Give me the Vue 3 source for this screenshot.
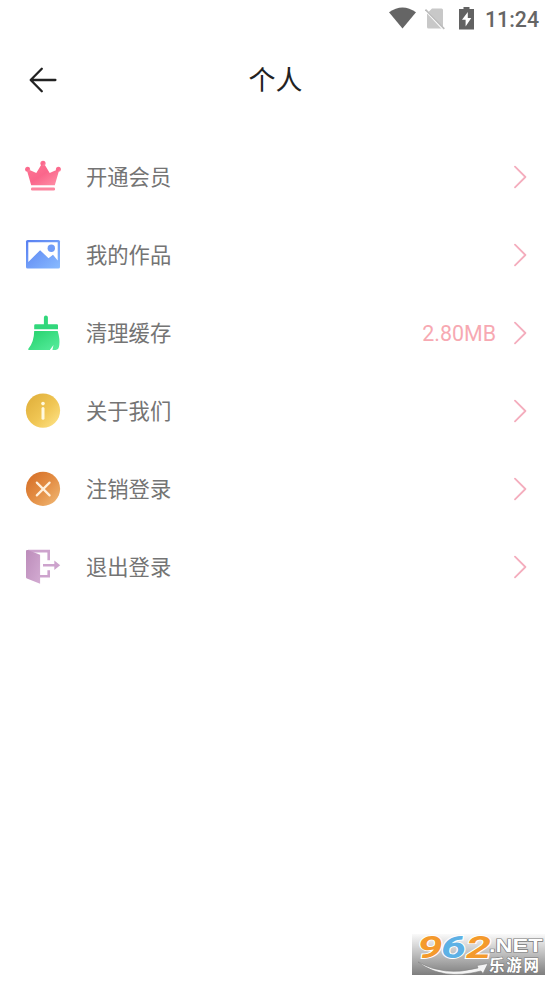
<script setup>
const rows = [
  { icon: 'crown', label: '开通会员' },
  { icon: 'gallery', label: '我的作品' },
  { icon: 'broom', label: '清理缓存', value: '2.80MB' },
  { icon: 'info', label: '关于我们' },
  { icon: 'cancel', label: '注销登录' },
  { icon: 'exit', label: '退出登录' },
]
</script>

<template>
  <main class="screen">
    <div class="status">
      <svg class="wifi" width="27" height="22" viewBox="0 0 27 22"><path d="M0 5.2Q13.5-4.2 27 5.2L13.5 21.5Z" fill="#656565" /></svg>
      <svg class="sim" width="20" height="22" viewBox="0 0 20 22">
        <path d="M7 .5h9.5Q18 .5 18 2v17q0 1.5-1.5 1.5h-13Q2 20.5 2 19V5.5Z" fill="#c8c8c8" />
        <path d="M-.3 1.3 18.7 21.5" stroke="#fff" stroke-width="2.2" /><path d="M.5 1.5 19.3 20.9" stroke="#bcbcbc" stroke-width="1.6" />
      </svg>
      <svg class="battery" width="15" height="23" viewBox="0 0 15 23"><path d="M4.5 0h6v2H15v20.5H0V2h4.5Z" fill="#626262" /><path d="M8.8 5 3 12.8h3.6v6.7l5.7-8.6H8.8Z" fill="#fff" /></svg>
      <span class="time">11:24</span>
    </div>
    <header class="header">
      <svg class="back" width="28" height="28" viewBox="0 0 28 28"><path d="M12.8 2.7 1.7 14l11.1 11.3M2 14h24.4" fill="none" stroke="#222" stroke-width="2.3" stroke-linecap="round" stroke-linejoin="round" /></svg>
      <h1>个人</h1>
    </header>
    <nav class="list">
      <div v-for="row in rows" :key="row.icon" class="row">
        <svg v-if="row.icon === 'crown'" class="icon" viewBox="0 0 36 36">
          <defs><linearGradient id="crown" x2="1" y2="1"><stop stop-color="#ff7895" /><stop offset=".5" stop-color="#fa668b" /><stop offset="1" stop-color="#ff91a8" /></linearGradient></defs>
          <g fill="url(#crown)"><path d="M1.8 11 3.5 10.5 11.3 14 17 4.5h2L24.7 14l7.8-3.5 1.7.5-4.4 15.2H6.2Z" /><circle cx="18" cy="4.3" r="2.6" /><circle cx="2.6" cy="10.2" r="2.5" /><circle cx="33.4" cy="10.2" r="2.5" /><rect x="6" y="28.4" width="24" height="3.2" rx="1.3" fill="#fc86a0" /></g>
        </svg>
        <svg v-else-if="row.icon === 'gallery'" class="icon" viewBox="0 0 36 36">
          <defs><linearGradient id="photo" x2="1" y2="1"><stop stop-color="#587ff1" /><stop offset="1" stop-color="#88bbff" /></linearGradient></defs>
          <rect x="1" y="3" width="34" height="28.6" rx="1.6" fill="url(#photo)" /><path d="M3.3 5.2h29.4v18.3L28 17.8l-4.5 3.4-8.4-8L3.3 25Z" fill="#fff" /><circle cx="26.3" cy="11.2" r="3.7" fill="#709cf7" />
        </svg>
        <svg v-else-if="row.icon === 'broom'" class="icon" viewBox="0 0 36 36">
          <defs><linearGradient id="brush" x2="1" y2="1"><stop stop-color="#24d16b" /><stop offset="1" stop-color="#58ed9e" /></linearGradient></defs>
          <path d="M18.9 2.5q0-2 2-2t2 2v6.8h9q1.1 0 1.1 1.2v3.8H9.2v-3.8q0-1.2 1.2-1.2h8.5Z" fill="#31d77b" /><path d="M9.2 16h23.5q2.4 8.2 1.6 14.1-.4 4.9-3.6 4.9h-3.3l1.1-5-3.7 5H4.6q-2.3 0-.9-1.8Q9 26.9 9.2 16Z" fill="url(#brush)" />
        </svg>
        <svg v-else-if="row.icon === 'info'" class="icon" viewBox="0 0 36 36">
          <defs><linearGradient id="gold" x2="1" y2="1"><stop stop-color="#deac38" /><stop offset=".55" stop-color="#f0c654" /><stop offset="1" stop-color="#ffe68c" /></linearGradient></defs>
          <circle cx="18" cy="17.6" r="17.1" fill="url(#gold)" /><circle cx="18" cy="10.6" r="1.8" fill="#fff9df" /><path d="M18 15.5v9.8" stroke="#fff9df" stroke-width="3" stroke-linecap="round" />
        </svg>
        <svg v-else-if="row.icon === 'cancel'" class="icon" viewBox="0 0 36 36">
          <defs><linearGradient id="orange" x2="1" y2="1"><stop stop-color="#d46b24" /><stop offset=".5" stop-color="#e38d43" /><stop offset="1" stop-color="#f1bb78" /></linearGradient></defs>
          <circle cx="18" cy="17.8" r="17.1" fill="url(#orange)" /><path d="m11.8 11.6 12.8 12.8m0-12.8L11.8 24.4" stroke="#fff0dc" stroke-width="2.2" stroke-linecap="round" />
        </svg>
        <svg v-else class="icon" viewBox="0 0 36 36">
          <defs><linearGradient id="door" x2="1" y2="1"><stop stop-color="#bc8cba" /><stop offset="1" stop-color="#d3abd2" /></linearGradient></defs>
          <path d="M3 2.1h20.7v9.2M14 27.2h9.7v-6M18 16.2h14" fill="none" stroke="#cda3cd" stroke-width="2.6" /><path d="m29.3 11.4 5.9 4.8-5.9 4.8Z" fill="#cda3cd" /><path d="M1 2.2q0-1.8 1.9-1.1l12.2 4.6v29L1.9 29.4q-.9-.3-.9-1.2Z" fill="url(#door)" />
        </svg>
        <span class="label">{{ row.label }}</span>
        <span v-if="row.value" class="value">{{ row.value }}</span>
        <svg class="chevron" width="13" height="24" viewBox="0 0 13 24"><path d="M1 1.7 11.4 12 1 22.3" fill="none" stroke="#f4adbd" stroke-width="1.8" stroke-linecap="round" stroke-linejoin="round" /></svg>
      </div>
    </nav>
    <svg class="watermark" width="133" height="41" viewBox="0 0 133 41">
      <defs>
        <linearGradient id="shade" x2="0" y2="1"><stop stop-color="#fafafa" /><stop offset=".5" stop-color="#bdbdbd" /><stop offset="1" stop-color="#7e7e7e" /></linearGradient>
      </defs>
      <rect width="133" height="41" fill="url(#shade)" />
      <g class="digits"><text x="5.5" y="24.3" textLength="25" lengthAdjust="spacingAndGlyphs" fill="#f49a2c">9</text><text x="29" y="24.3" textLength="25" lengthAdjust="spacingAndGlyphs" fill="#5db1e5">6</text><text x="54" y="24.3" textLength="25" lengthAdjust="spacingAndGlyphs" fill="#f49a2c">2</text></g>
      <text class="net" x="77" y="18.2" textLength="53.5" lengthAdjust="spacingAndGlyphs">.NET</text>
      <path d="M6 28Q32 43 66 34L65 31.5 76 29.5 71 39.5 69 37Q30 47 6 28Z" fill="#f4f4f4" stroke="#858585" stroke-width=".6" />
      <text class="site" x="77" y="36.5" textLength="50">乐游网</text>
    </svg>
  </main>
</template>

<style>
body { background: #fff; }
</style>

<style scoped>
.screen { position: relative; width: 551px; height: 981px; overflow: hidden; background: #fff; font-family: Roboto, "Noto Sans CJK SC", sans-serif; }
.status { height: 38px; display: flex; align-items: center; justify-content: flex-end; padding-right: 12px; box-sizing: border-box; }
.wifi { margin-right: 9px; margin-bottom: 2px; }
.sim { margin-right: 14px; }
.battery { margin-right: 11px; margin-bottom: 1px; }
.time { width: 54px; padding-top: 2px; font-size: 21.3px; font-weight: 500; line-height: 36px; color: #656565; white-space: nowrap; }
.header { height: 84px; display: grid; grid-template-columns: 86px 1fr 86px; align-items: center; }
.back { margin-left: 29px; }
h1 { margin: 0; padding-top: 2px; text-align: center; font-size: 27px; font-weight: 400; line-height: 40px; color: #222; }
.list { padding-top: 16px; }
.row { height: 78px; display: flex; align-items: center; padding: 0 24px 0 25px; }
.icon { width: 36px; height: 36px; flex: none; }
.label { margin-left: 25px; padding-top: 2px; font-size: 21.3px; line-height: 32px; color: #747474; }
.value { margin-left: auto; margin-right: 18px; padding-top: 1px; font-size: 21.4px; color: #f7a9b2; }
.chevron { flex: none; }
.label + .chevron { margin-left: auto; }
.watermark { position: absolute; left: 412px; top: 934px; }
.digits { font: italic 700 31px Roboto, sans-serif; stroke: #fff; stroke-width: 1.8px; paint-order: stroke; }
.net { font: 700 17.5px "Liberation Sans", sans-serif; fill: #fff; stroke: #777; stroke-width: 1.2px; paint-order: stroke; }
.site { font: 700 15.5px "Noto Sans CJK SC", sans-serif; fill: #fff; stroke: #777; stroke-width: 1px; paint-order: stroke; }
</style>
